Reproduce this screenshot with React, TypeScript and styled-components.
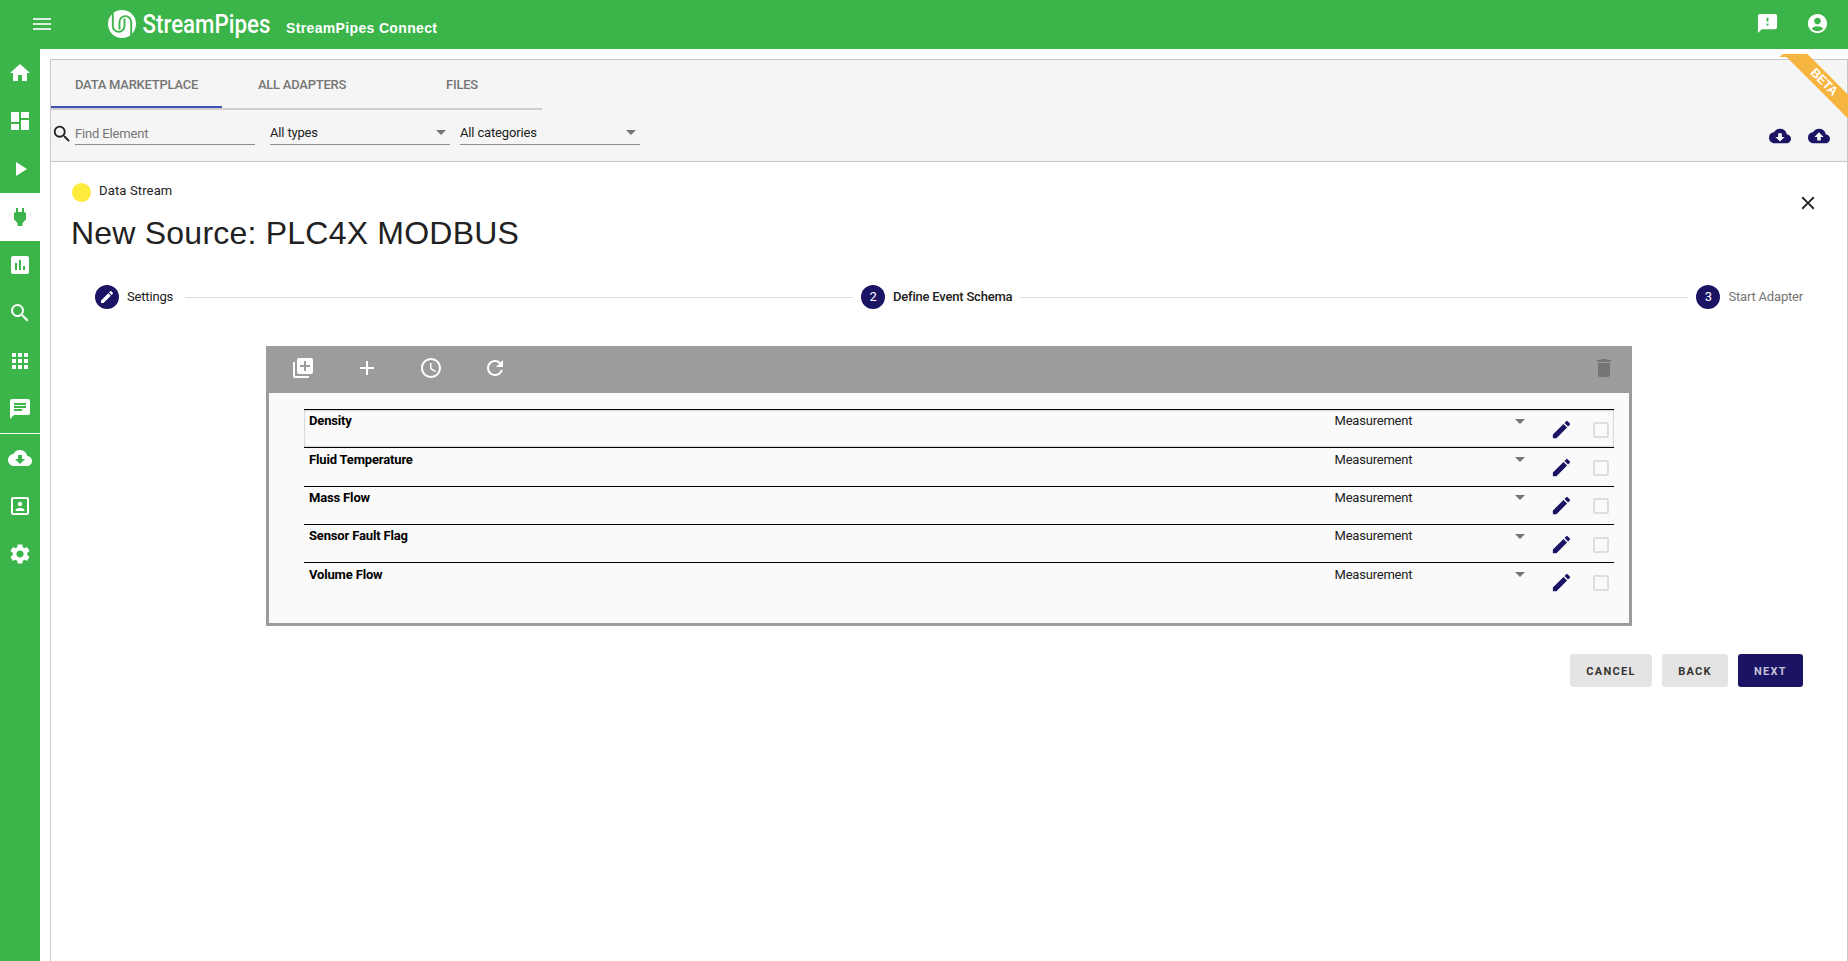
import React from "react";
import styled, { createGlobalStyle, css } from "styled-components";
import {
  MdMenu, MdFeedback, MdAccountCircle, MdHome, MdDashboard, MdPlayArrow, MdPower,
  MdAssessment, MdSearch, MdApps, MdChat, MdCloudDownload, MdCloudUpload, MdPortrait,
  MdSettings, MdClose, MdEdit, MdModeEdit, MdLibraryAdd, MdAdd, MdSchedule, MdRefresh, MdDelete,
} from "react-icons/md";

const green = "#3bb54a";
const navy = "#1b1464";
const line = "#c8c8c8";

const GlobalStyle = createGlobalStyle`
  * { box-sizing: border-box; }
  body {
    margin: 0;
    overflow: hidden;
    background: #fff;
    color: #212121;
    font: 13px/16px Roboto, "Liberation Sans", sans-serif;
    letter-spacing: -0.16px;
  }
  svg { display: block; flex: none; }
`;

const Page = styled.div`
  height: 961px;
  display: flex;
  flex-direction: column;
`;

const Header = styled.header`
  height: 49px;
  flex: none;
  display: flex;
  align-items: center;
  padding: 0 19px 2px 30px;
  background: ${green};
  color: #fff;
`;

const MenuButton = styled.span`
  opacity: 0.82;
  margin-right: 53px;
`;

const LogoImage = styled.svg`
  overflow: visible;
`;

const PageName = styled.span`
  margin: 9px auto 0 9px;
  font: bold 14px/16px "Liberation Sans", Arial, sans-serif;
  letter-spacing: 0.35px;
`;

const HeaderActions = styled.div`
  display: flex;
  gap: 27px;
`;

const Body = styled.div`
  flex: 1;
  min-height: 0;
  display: flex;
`;

const Sidebar = styled.nav`
  width: 40px;
  flex: none;
  background: ${green};
`;

const NavItem = styled.div<{ $active?: boolean; $divided?: boolean }>`
  height: 48px;
  display: flex;
  align-items: center;
  justify-content: center;
  color: ${(p) => (p.$active ? green : "#fff")};
  background: ${(p) => (p.$active ? "#fff" : "transparent")};
  ${(p) => p.$divided && css`
    height: 49px;
    border-top: 1px solid #fff;
  `}
`;

const Main = styled.main`
  position: relative;
  flex: 1;
  min-width: 0;
  padding: 10px 0 0 10px;
`;

const Panel = styled.section`
  height: 100%;
  border: 1px solid ${line};
  border-bottom: 0;
`;

const TopBar = styled.div`
  height: 102px;
  background: #f5f5f5;
  border-bottom: 1px solid ${line};
`;

const Tabs = styled.div`
  display: flex;
  width: 491px;
  height: 50px;
  border-bottom: 2px solid #cfcfcf;
`;

const Tab = styled.div<{ $width: number; $active?: boolean }>`
  width: ${(p) => p.$width}px;
  height: 48px;
  padding-top: 3px;
  display: flex;
  align-items: center;
  justify-content: center;
  font-weight: 500;
  letter-spacing: -0.25px;
  color: #757575;
  border-bottom: 2px solid ${(p) => (p.$active ? "#3f51b5" : "transparent")};
`;

const Filters = styled.div`
  display: flex;
  align-items: center;
  height: 51px;
  padding: 0 17px 4px 0;
`;

const SearchIcon = styled.span`
  width: 24px;
`;

const Field = styled.div<{ $muted?: boolean; $gap: number }>`
  display: flex;
  align-items: center;
  justify-content: space-between;
  width: 180px;
  height: 23px;
  margin: 0 ${(p) => p.$gap}px 0 0;
  padding: ${(p) => (p.$muted ? "1px 4px 0 0" : "0 4px 1px 0")};
  border-bottom: 1px solid #8d8d8d;
  color: ${(p) => (p.$muted ? "#757575" : "#212121")};
`;

const Caret = styled.i`
  border: 5px solid transparent;
  border-top-color: #757575;
  border-bottom: 0;
`;

const CloudActions = styled.div`
  display: flex;
  gap: 17px;
  margin: 5px 0 0 auto;
  color: ${navy};
`;

const RibbonCorner = styled.div`
  position: absolute;
  top: 5px;
  right: 0;
  width: 70px;
  height: 70px;
  overflow: hidden;

  &::before {
    content: "";
    position: absolute;
    left: 1px;
    top: 0;
    border: 3px solid transparent;
    border-width: 0 4px 3px 4px;
    border-bottom-color: #f6b440;
    width: 12px;
  }
`;

const Ribbon = styled.div`
  position: absolute;
  left: -10px;
  top: 19px;
  width: 110px;
  height: 17px;
  padding-left: 2px;
  transform: rotate(45deg);
  background: #f6b440;
  color: #fff;
  font: bold 12.5px/17px "Liberation Sans", Arial, sans-serif;
  text-align: center;
`;

const Content = styled.div`
  padding: 19px 20px 0;
`;

const SourceHead = styled.div`
  display: flex;
  justify-content: space-between;
`;

const StreamKind = styled.div`
  display: flex;
  align-items: center;
  gap: 8px;
  height: 24px;
  padding-left: 1px;
`;

const Dot = styled.i`
  width: 19px;
  height: 19px;
  margin-top: -1px;
  border-radius: 50%;
  background: #ffeb3b;
`;

const StreamLabel = styled.span`
  letter-spacing: 0.15px;
  margin-top: -5px;
`;

const Title = styled.h1`
  margin: 8px 0 0;
  font: 32px/40px "Liberation Sans", Arial, sans-serif;
  letter-spacing: 0.22px;
`;

const CloseButton = styled.span`
  padding: 11px 8.5px 0 0;
`;

const Stepper = styled.div`
  display: flex;
  align-items: center;
  height: 72px;
  margin-top: 8px;
  padding: 0 24px;
`;

const StepBadge = styled.span`
  display: flex;
  align-items: center;
  justify-content: center;
  width: 24px;
  height: 24px;
  margin: 0 8px 0 0;
  border-radius: 50%;
  background: ${navy};
  color: #fff;
`;

const StepLabel = styled.span<{ $weight?: number; $muted?: boolean }>`
  min-width: 50px;
  font-weight: ${(p) => p.$weight ?? 400};
  letter-spacing: ${(p) => (p.$weight ? "-0.21px" : "-0.18px")};
  color: ${(p) => (p.$muted ? "#757575" : "#212121")};
`;

const StepLine = styled.i`
  flex: 1;
  height: 1px;
  margin: 0 8px;
  background: #dedede;
`;

const SchemaBox = styled.div`
  width: 1366px;
  height: 280px;
  margin: 13px 0 0 195px;
  border: 3px solid #9c9c9c;
  border-top: 0;
  background: #fafafa;
`;

const Toolbar = styled.div`
  display: flex;
  align-items: center;
  gap: 40px;
  height: 47px;
  padding: 0 13.5px 3px 22px;
  background: #9c9c9c;
  color: #fff;
`;

const DeleteAction = styled.span`
  margin-left: auto;
  color: #757575;
`;

const Rows = styled.div`
  padding: 16px 15px 0 35px;
`;

const Row = styled.div<{ $focused?: boolean }>`
  display: grid;
  grid-template-columns: 1fr 190.5px 50px 39px;
  height: 38.3px;
  padding: 0 0 0 5px;
  border-top: 1px solid #000;
  box-shadow: ${(p) => (p.$focused ? "inset 0 0 2px rgba(0,0,0,.45)" : "none")};
`;

const Name = styled.b`
  padding-top: 3.4px;
  color: #000;
`;

const TypeSelect = styled.div`
  display: flex;
  align-items: center;
  justify-content: space-between;
  height: 22px;
  margin-top: 0.4px;
  letter-spacing: -0.21px;
`;

const EditCell = styled.div`
  padding: 7.7px 0 0 25px;
  color: ${navy};
`;

const CheckCell = styled.div`
  padding: 11.8px 0 0 18px;
`;

const Checkbox = styled.span`
  display: block;
  width: 16px;
  height: 16px;
  border: 2px solid #dedede;
  border-radius: 2px;
`;

const Buttons = styled.div`
  display: flex;
  justify-content: flex-end;
  gap: 10px;
  padding: 28px 24px 0 0;
`;

const Button = styled.button<{ $primary?: boolean; $width: number }>`
  width: ${(p) => p.$width}px;
  height: 33px;
  padding: 2px 0 0;
  border: 0;
  border-radius: 3px;
  background: ${(p) => (p.$primary ? navy : "#e4e4e4")};
  color: ${(p) => (p.$primary ? "#c6c4d8" : "#333")};
  font: 700 11px/16px Roboto, sans-serif;
  letter-spacing: 1.3px;
`;

const Logo = () => (
  <LogoImage width="170" height="40" viewBox="0 -2 170 40">
    <circle cx="15" cy="18" r="14" fill="#fff" />
    <g fill="none" stroke={green} strokeWidth="1.9">
      <path d="M5.8 6.5V20a5.8 5.8 0 0 0 11.7 0V12.5" />
      <path d="M24.2 29.5V16a5.8 5.8 0 0 0 -11.7 0V23.5" />
    </g>
    <text x="35.5" y="27" fill="#fff" fontFamily="Roboto, sans-serif" fontWeight="500" letterSpacing="0"
      fontSize="25.5" textLength="128" lengthAdjust="spacingAndGlyphs">StreamPipes</text>
  </LogoImage>
);

const navIcons = [MdHome, MdDashboard, MdPlayArrow, MdPower, MdAssessment, MdSearch, MdApps, MdChat,
  MdCloudDownload, MdPortrait, MdSettings];

const properties = ["Density", "Fluid Temperature", "Mass Flow", "Sensor Fault Flag", "Volume Flow"];

export default function App() {
  return (
    <Page>
      <GlobalStyle />
      <Header>
        <MenuButton><MdMenu size={24} /></MenuButton>
        <Logo />
        <PageName>StreamPipes Connect</PageName>
        <HeaderActions>
          <MdFeedback size={23} />
          <MdAccountCircle size={23} />
        </HeaderActions>
      </Header>
      <Body>
        <Sidebar>
          {navIcons.map((Icon, i) => (
            <NavItem key={i} $active={i === 3} $divided={i === 8}><Icon size={24} /></NavItem>
          ))}
        </Sidebar>
        <Main>
          <Panel>
            <TopBar>
              <Tabs>
                <Tab $width={171} $active>DATA MARKETPLACE</Tab>
                <Tab $width={160}>ALL ADAPTERS</Tab>
                <Tab $width={160}>FILES</Tab>
              </Tabs>
              <Filters>
                <SearchIcon><MdSearch size={22} /></SearchIcon>
                <Field $muted $gap={15}>Find Element</Field>
                <Field $gap={10}>All types<Caret /></Field>
                <Field $gap={0}>All categories<Caret /></Field>
                <CloudActions>
                  <MdCloudDownload size={22} />
                  <MdCloudUpload size={22} />
                </CloudActions>
              </Filters>
            </TopBar>
            <Content>
              <SourceHead>
                <div>
                  <StreamKind><Dot /><StreamLabel>Data Stream</StreamLabel></StreamKind>
                  <Title>New Source: PLC4X MODBUS</Title>
                </div>
                <CloseButton><MdClose size={22} /></CloseButton>
              </SourceHead>
              <Stepper>
                <StepBadge><MdModeEdit size={16} /></StepBadge>
                <StepLabel>Settings</StepLabel>
                <StepLine />
                <StepBadge>2</StepBadge>
                <StepLabel $weight={500}>Define Event Schema</StepLabel>
                <StepLine />
                <StepBadge>3</StepBadge>
                <StepLabel $muted>Start Adapter</StepLabel>
              </Stepper>
              <SchemaBox>
                <Toolbar>
                  <MdLibraryAdd size={24} />
                  <MdAdd size={24} />
                  <MdSchedule size={24} />
                  <MdRefresh size={24} />
                  <DeleteAction><MdDelete size={24} /></DeleteAction>
                </Toolbar>
                <Rows>
                  {properties.map((name, i) => (
                    <Row key={name} $focused={i === 0}>
                      <Name>{name}</Name>
                      <TypeSelect>Measurement<Caret /></TypeSelect>
                      <EditCell><MdEdit size={23} /></EditCell>
                      <CheckCell><Checkbox /></CheckCell>
                    </Row>
                  ))}
                </Rows>
              </SchemaBox>
              <Buttons>
                <Button $width={82}>CANCEL</Button>
                <Button $width={66}>BACK</Button>
                <Button $width={65} $primary>NEXT</Button>
              </Buttons>
            </Content>
          </Panel>
          <RibbonCorner><Ribbon>BETA</Ribbon></RibbonCorner>
        </Main>
      </Body>
    </Page>
  );
}
